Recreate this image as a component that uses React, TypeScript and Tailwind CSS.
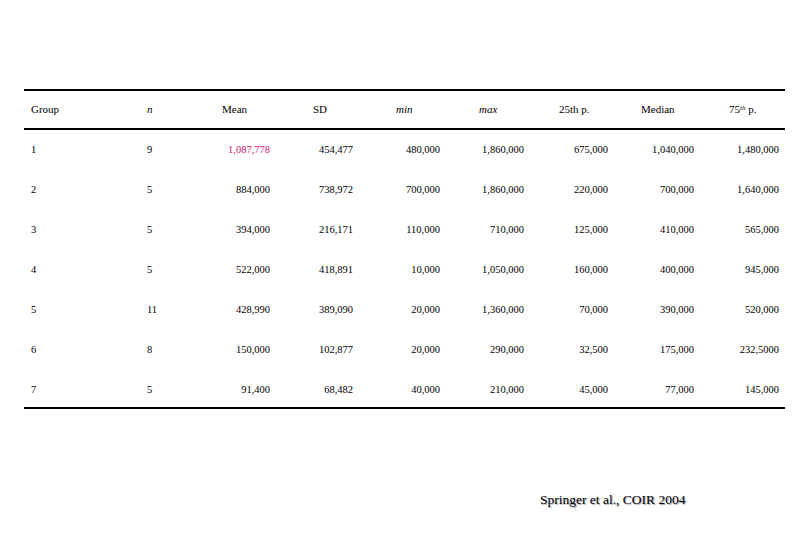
const rows = [
  ["1", "9", "1,087,778", "454,477", "480,000", "1,860,000", "675,000", "1,040,000", "1,480,000"],
  ["2", "5", "884,000", "738,972", "700,000", "1,860,000", "220,000", "700,000", "1,640,000"],
  ["3", "5", "394,000", "216,171", "110,000", "710,000", "125,000", "410,000", "565,000"],
  ["4", "5", "522,000", "418,891", "10,000", "1,050,000", "160,000", "400,000", "945,000"],
  ["5", "11", "428,990", "389,090", "20,000", "1,360,000", "70,000", "390,000", "520,000"],
  ["6", "8", "150,000", "102,877", "20,000", "290,000", "32,500", "175,000", "232,5000"],
  ["7", "5", "91,400", "68,482", "40,000", "210,000", "45,000", "77,000", "145,000"],
];

// inner width of each numeric column, header sits on its left edge
const innerW = ["w-[48px]", "w-[40px]", "w-[44px]", "w-[45px]", "w-[49px]", "w-[53px]", "w-[50px]"];

const grid = "grid grid-cols-[116px_75px_91px_83px_83px_80px_82px_88px_56px] pl-[7px]";

export default function App() {
  return (
    <div
      className="w-[810px] h-[540px] bg-white text-black relative overflow-hidden"
      style={{ fontFamily: '"Liberation Serif", serif' }}
    >
      <div className="pt-[89px] pl-[24px] w-[785px]">
        <div className="border-t-2 border-black" />
        <div className={`${grid} h-[37px] items-center text-[11px]`}>
          <div>Group</div>
          <div className="italic">n</div>
          <div>Mean</div>
          <div>SD</div>
          <div className="italic">min</div>
          <div className="italic">max</div>
          <div>25th p.</div>
          <div>Median</div>
          <div>
            75<sup className="italic text-[7px]">th</sup> p.
          </div>
        </div>
        <div className="border-t-2 border-black" />
        <div>
          {rows.map((r, i) => (
            <div key={i} className={`${grid} h-[40px] last:h-[37px] pt-[13px] text-[10.5px] leading-[13px]`}>
              <div>{r[0]}</div>
              <div>{r[1]}</div>
              {r.slice(2).map((v, j) => (
                <div key={j}>
                  <div
                    className={`${innerW[j]} text-right whitespace-nowrap ${
                      i === 0 && j === 0 ? "text-[#d4146e]" : ""
                    }`}
                  >
                    {v}
                  </div>
                </div>
              ))}
            </div>
          ))}
        </div>
        <div className="border-t-2 border-black" />
      </div>
      <div className="absolute left-[540px] top-[490px] text-[13.5px] [text-shadow:1px_1px_1px_#9ca3af]">
        Springer et al., COIR 2004
      </div>
    </div>
  );
}
